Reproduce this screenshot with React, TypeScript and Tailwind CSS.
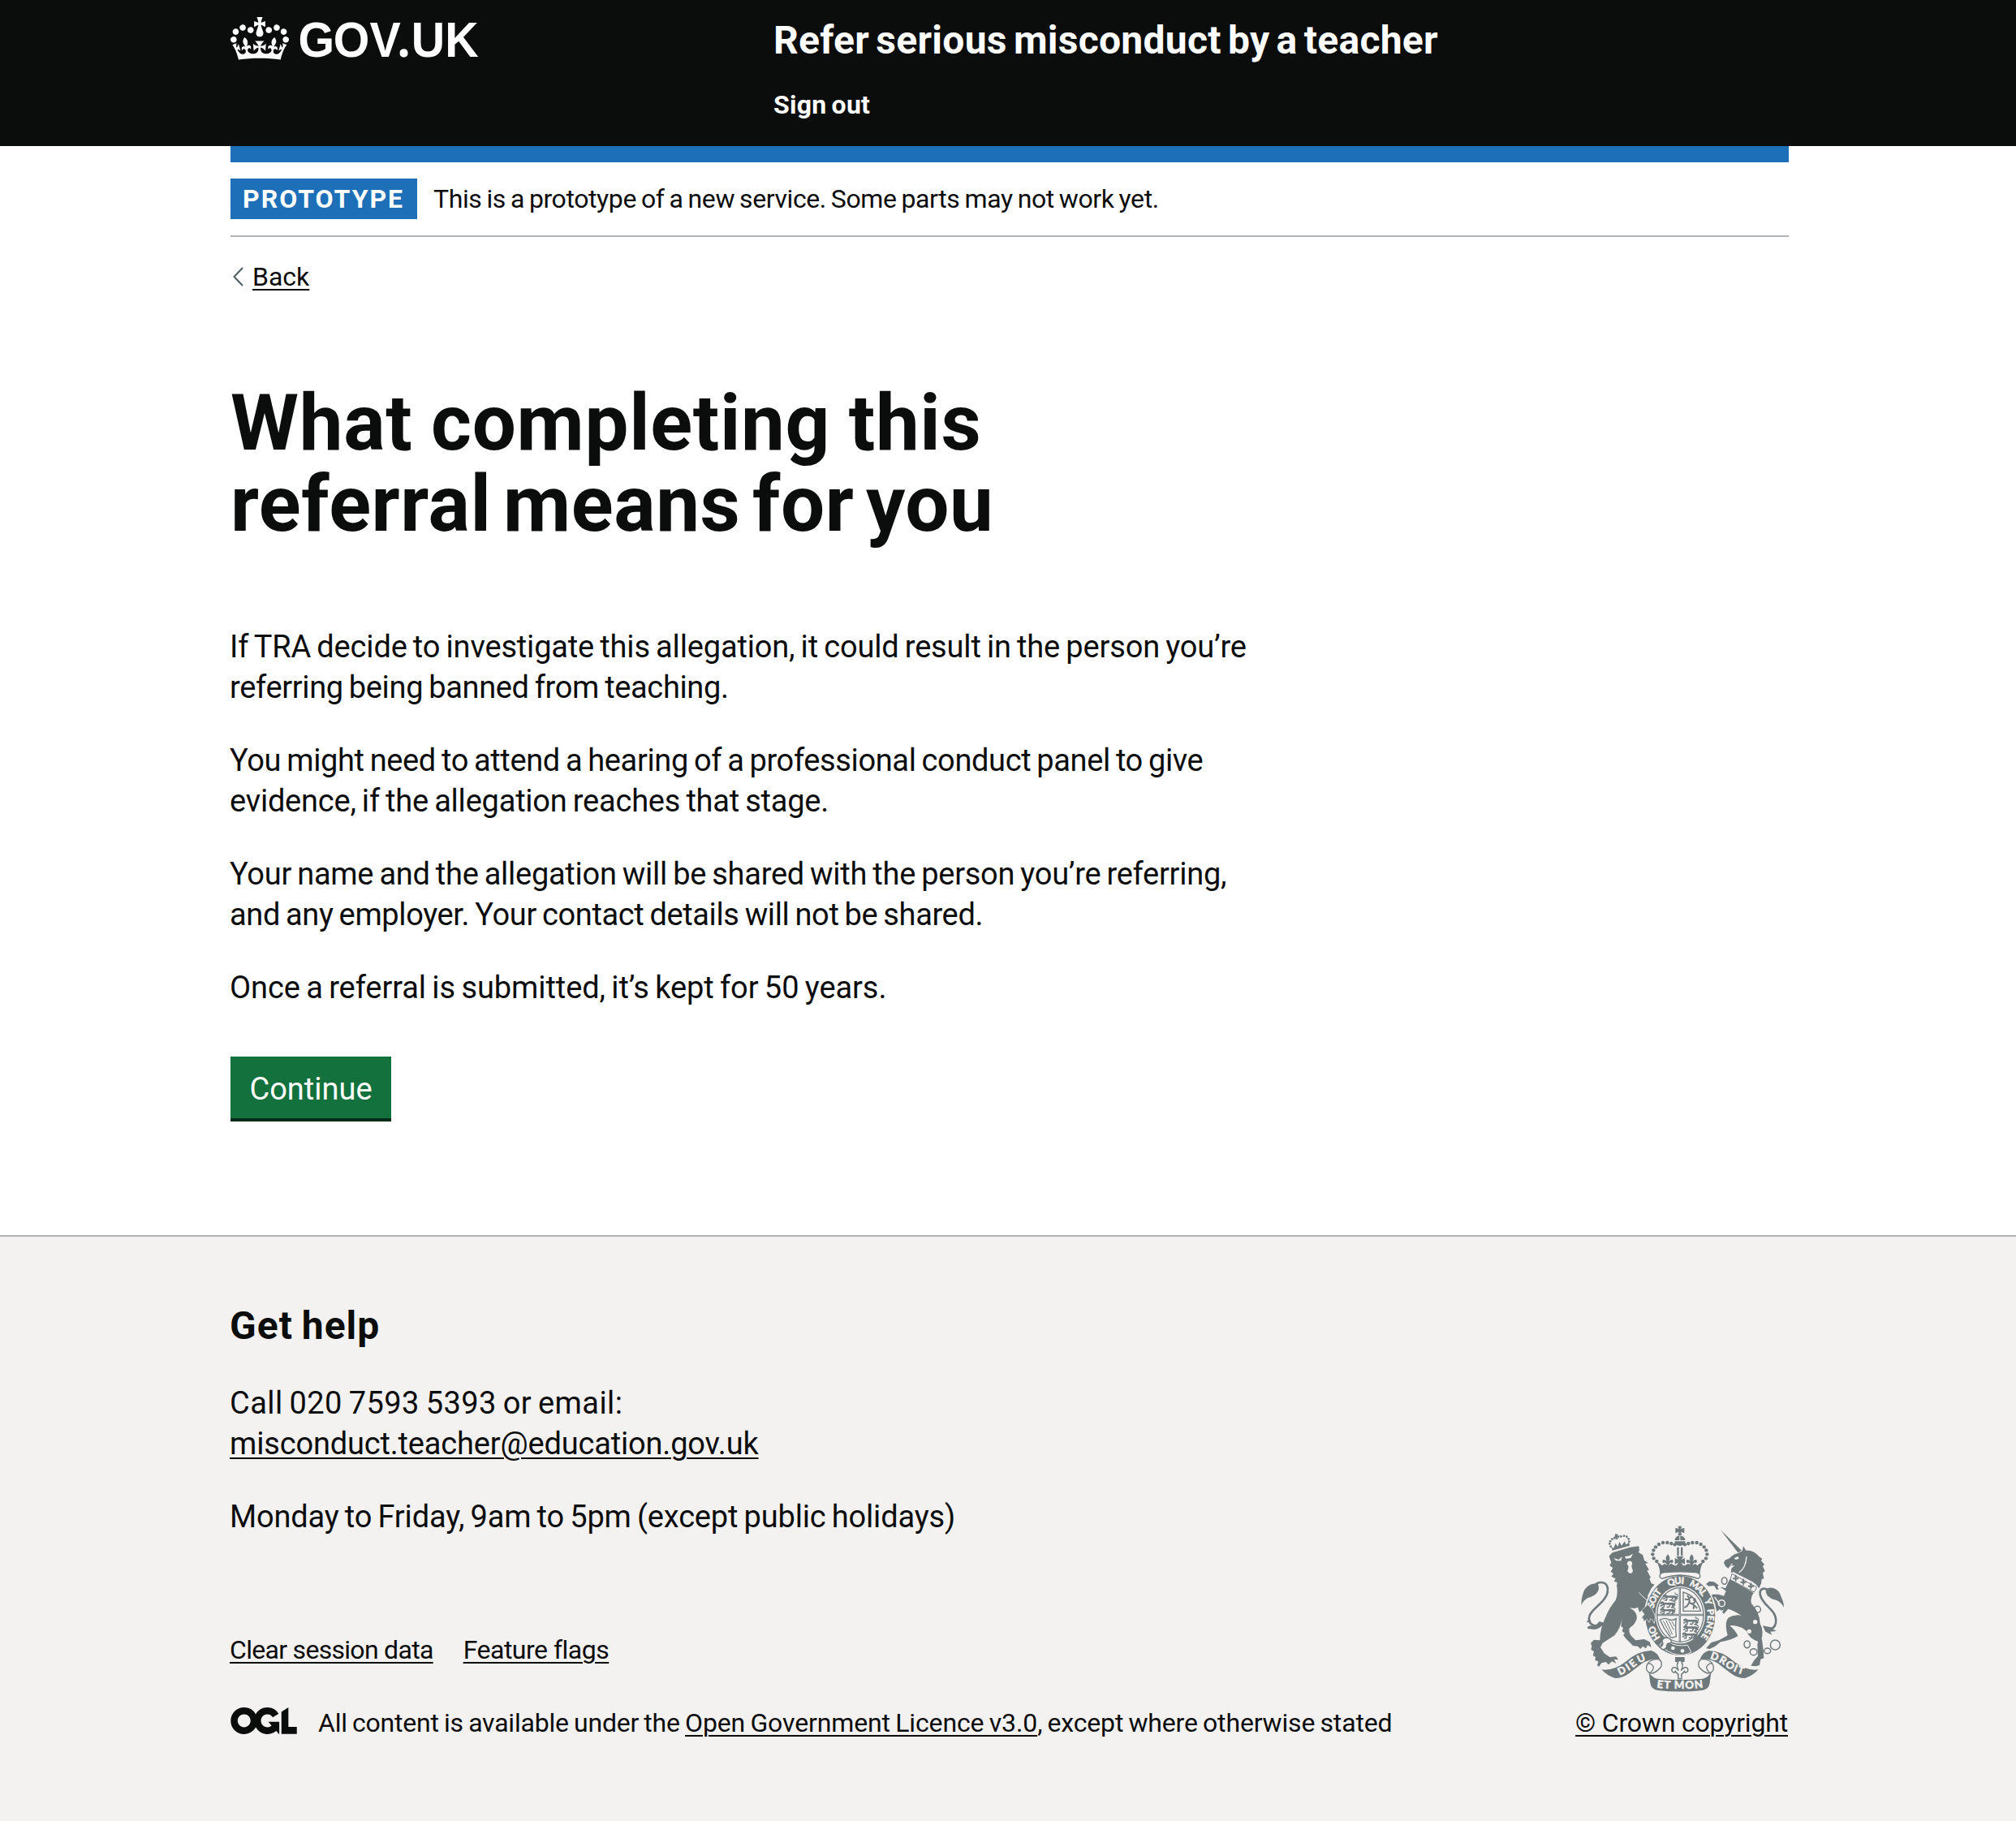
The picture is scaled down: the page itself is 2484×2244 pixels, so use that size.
import type { ReactNode } from "react";

function Crown() {
  return (
    <svg viewBox="0 0 132 97" className="mt-px h-[53px] w-[72px] fill-current" aria-hidden="true">
      <path
        fillRule="evenodd"
        d="M25 30.2c3.5 1.5 7.7-.2 9.1-3.7 1.5-3.6-.2-7.8-3.9-9.2-3.6-1.4-7.6.3-9.1 3.9-1.4 3.5.3 7.5 3.9 9zM9 39.5c3.6 1.5 7.8-.2 9.2-3.7 1.5-3.6-.2-7.8-3.9-9.1-3.6-1.5-7.6.2-9.1 3.8-1.4 3.5.3 7.5 3.8 9zM4.4 57.2c3.5 1.5 7.7-.2 9.1-3.8 1.5-3.6-.2-7.7-3.9-9.1-3.5-1.5-7.6.3-9.1 3.8-1.4 3.5.3 7.6 3.9 9.1zm38.3-21.4c3.5 1.5 7.7-.2 9.1-3.8 1.5-3.6-.2-7.7-3.9-9.1-3.6-1.5-7.6.3-9.1 3.8-1.3 3.6.4 7.7 3.9 9.1zm64.4-5.6c-3.6 1.5-7.8-.2-9.1-3.7-1.5-3.6.2-7.8 3.8-9.2 3.6-1.4 7.7.3 9.2 3.9 1.3 3.5-.4 7.5-3.9 9zm15.9 9.3c-3.6 1.5-7.7-.2-9.1-3.7-1.5-3.6.2-7.8 3.7-9.1 3.6-1.5 7.7.2 9.2 3.8 1.5 3.5-.3 7.5-3.8 9zm4.7 17.7c-3.6 1.5-7.8-.2-9.2-3.8-1.5-3.6.2-7.7 3.9-9.1 3.6-1.5 7.7.3 9.2 3.8 1.3 3.5-.4 7.6-3.9 9.1zM89.3 35.8c-3.6 1.5-7.8-.2-9.2-3.8-1.4-3.6.2-7.7 3.9-9.1 3.6-1.5 7.7.3 9.2 3.8 1.4 3.6-.3 7.7-3.9 9.1zM69.7 17.7l8.9 4.7V9.3l-8.9 2.8c-.2-.3-.5-.6-.9-.9L72.4 0H59.6l3.5 11.2c-.3.3-.6.5-.9.9l-8.8-2.8v13.1l8.8-4.7c.3.3.6.7.9.9l-5 15.4v.1c-.2.8-.4 1.6-.4 2.4 0 4.1 3.1 7.5 7 8.1h.2c.3 0 .7.1 1 .1.4 0 .7 0 1-.1h.2c4-.6 7.1-4.1 7.1-8.1 0-.8-.1-1.7-.4-2.4V34l-5.1-15.4c.4-.2.7-.6 1-.9zM66 92.8c16.9 0 32.8 1.1 47.1 3.2 4-16.9 8.9-26.7 14-33.5l-9.6-3.4c1 4.9 1.1 7.2 0 10.2-1.5-1.4-3-4.3-4.2-8.7L108.6 76c2.8-2 5-3.2 7.5-3.3-4.4 9.4-10 11.9-13.6 11.2-4.3-.8-6.3-4.6-5.6-7.9 1-4.7 5.7-5.9 8-.5 4.3-8.7-3-11.4-7.6-8.8 7.1-7.2 7.9-13.5 2.1-21.1-8 6.1-8.1 12.3-4.5 20.8-4.7-5.4-12.1-2.5-9.5 6.2 3.4-5.2 7.9-2 7.2 3.1-.6 4.3-6.4 7.8-13.5 7.2-10.3-.9-10.9-8-11.2-13.8 2.5-.5 7.1 1.8 11 7.3L80.2 60c-4.1 4.4-8 5.3-12.3 5.4 1.4-4.4 8-11.6 8-11.6H55.5s6.4 7.2 7.9 11.6c-4.2-.1-8-1-12.3-5.4l1.4 16.4c3.9-5.5 8.5-7.7 10.9-7.3-.3 5.8-.9 12.8-11.1 13.8-7.2.6-12.9-2.9-13.5-7.2-.7-5 3.8-8.3 7.1-3.1 2.7-8.7-4.6-11.6-9.4-6.2 3.7-8.5 3.6-14.7-4.6-20.8-5.8 7.6-5 13.9 2.2 21.1-4.7-2.6-11.9.1-7.7 8.8 2.3-5.5 7.1-4.2 8.1.5.7 3.3-1.3 7.1-5.7 7.9-3.5.7-9-1.8-13.5-11.2 2.5.1 4.7 1.3 7.5 3.3l-4.7-15.4c-1.2 4.4-2.7 7.2-4.3 8.7-1.1-3-.9-5.3 0-10.2l-9.5 3.4c5 6.9 9.9 16.7 14 33.5 14.8-2.1 30.8-3.2 47.7-3.2z"
      />
    </svg>
  );
}

function Wordmark() {
  return (
    <svg viewBox="0 0 240 70" className="h-[70px] w-[240px] overflow-visible fill-current font-['Liberation_Sans'] text-[61px] font-bold">
      <g transform="scale(.94 1)">
        <text y="60" x="4.7 50.7 98.500">GOV</text>
        <text y="60" x="134.6" className="font-['Noto_Sans']">.</text>
        <text y="60" x="153 197">UK</text>
      </g>
    </svg>
  );
}

function OglLogo() {
  return (
    <svg viewBox="0 0 483.2 195.7" className="h-[33px] w-[82px] fill-current" aria-hidden="true">
      <path d="M421.5 142.8V.1l-50.7 32.3v161.1h112.4v-50.7zm-122.3-9.6A47.12 47.12 0 0 1 221 97.8c0-26 21.1-47.1 47.1-47.1 16.7 0 31.4 8.7 39.7 21.8l42.7-27.2A97.63 97.63 0 0 0 268.1 0c-36.5 0-68.3 20.1-85.1 49.7A98 98 0 0 0 97.8 0C43.9 0 0 43.9 0 97.8s43.9 97.8 97.8 97.8c36.5 0 68.3-20.1 85.1-49.7a97.76 97.76 0 0 0 149.6 25.4l19.4 22.2h3v-87.8h-80l24.3 27.5zM97.8 145c-26 0-47.1-21.1-47.1-47.1s21.1-47.1 47.1-47.1 47.1 21.1 47.1 47.1S123.8 145 97.8 145" />
    </svg>
  );
}

const INK = "#6f797b";
const PAPER = "#f3f2f1";

const BEADS: [number, number][] = [
  [431, 128], [418, 124], [403, 121], [387, 121], [372, 127], [360, 137], [352, 149], [349, 164], [353, 179], [364, 190],
];

const SMALL_BEADS: [number, number][] = [
  [208, 104], [199, 108], [192, 116], [190, 125], [194, 135], [232, 98], [243, 96], [253, 99], [260, 107], [262, 117],
];

function HeraldicLion({ x, y }: { x: number; y: number }) {
  return (
    <g transform={`translate(${x} ${y})`} fill="none" stroke={INK} strokeWidth="4.5" strokeLinecap="round">
      <path d="M4 4 Q10 -2 13 5 L40 6 Q50 4 52 12" strokeWidth="8" />
      <path d="M12 9 L2 14 M16 10 L14 19 L8 19 M38 10 L32 19 L26 18 M46 11 L48 19 L42 19" />
      <path d="M52 10 Q60 2 52 -3 Q44 -4 46 -8" strokeWidth="3.5" />
    </g>
  );
}

function Fleur({ x, y, s }: { x: number; y: number; s: number }) {
  return (
    <g transform={`translate(${x} ${y}) scale(${s})`}>
      <path d="M0 -24 C9 -14 9 -6 3 4 C8 -4 18 -8 20 2 C20 9 13 10 11 6 C9 10 6 10 4 14 L4 24 L-4 24 L-4 14 C-6 10 -9 10 -11 6 C-13 10 -20 9 -20 2 C-18 -8 -8 -4 -3 4 C-9 -6 -9 -14 0 -24Z" />
    </g>
  );
}

function RoyalArms() {
  return (
    <svg viewBox="84 58 750 615" className="h-[205px] w-[250px]" fill={INK} role="img" aria-label="Royal coat of arms">
      {/* supporters: lion */}
      <path d="M190 178 L188 170 L200 158 L266 138 L298 134 L300 150 L296 156 L312 166 L318 186 L333 197 L322 198 L336 222 L328 224 L342 250 L337 254 L344 272 L356 276 L344 290 L330 318 L344 340 L356 368 L362 402 L355 420 L349 408 L341 402 L336 416 L328 404 L318 412 L314 404 L308 398 L318 386 L308 372 L300 378 L294 360 L283 364 L264 362 Q294 378 290 404 Q282 426 264 436 Q258 450 270 466 L286 482 L318 478 L338 488 L344 508 L330 500 L324 512 L312 504 L304 514 L294 504 L276 502 L262 488 L250 476 L240 462 L246 456 L236 448 L240 436 L232 430 L236 398 Q232 436 208 464 L164 492 L156 508 L170 530 L190 544 L214 542 L222 554 L206 552 L214 568 L198 560 L186 572 L176 562 L160 566 L150 580 L144 574 L148 560 L136 556 L138 544 L128 538 L132 524 L121 516 L124 504 L120 492 L132 480 L154 482 Q154 440 174 398 Q188 362 212 334 Q222 308 216 280 L218 268 L206 264 L212 254 L196 246 L204 236 L194 228 L202 214 L190 206 L196 194Z" />
      <path fill={PAPER} d="M204 178 L224 184 L236 172 L232 188 L214 188Z M246 172 L262 170 L276 162 L268 178 L250 180Z M258 190 Q272 184 274 200 Q268 206 272 214 Q280 228 270 234 Q258 236 256 224 Q262 212 258 204 Q250 204 258 190Z" />
      <path d="M198 152 L264 132" stroke={PAPER} strokeWidth="4" />
      <path d="M298 306 L334 340 Q352 366 352 402" fill="none" stroke={PAPER} strokeWidth="3" />
      <path d="M200 150 L196 136 L204 142 L212 124 L220 136 L226 118 L234 132 L246 116 L250 128 L262 120 L264 132Z" />
      <path d="M211 88 L222 91 L219 96 L227 95 L225 104 L219 101 L221 108 L212 109 L214 102 L207 104Z" />
      {SMALL_BEADS.map(([x, y]) => (
        <circle key={`${x}-${y}`} cx={x} cy={y} r="4.200" />
      ))}
      <path d="M164 418 C134 440 104 420 116 390 C128 362 168 346 180 312 C188 284 178 268 158 268 C146 268 138 274 134 282" fill="none" stroke={INK} strokeWidth="8" />
      <path d="M146 272 C122 270 102 282 94 302 C90 316 84 330 86 352 C92 336 104 326 120 322 C146 312 156 294 146 272Z M120 428 C104 430 104 442 118 440 C140 446 154 438 172 418 L152 412 C144 424 132 430 120 428Z M116 400 L104 416 L122 414Z" />

      {/* supporters: unicorn */}
      <path d="M600 74 L678 150 L664 158Z" />
      <path d="M664 160 L680 152 L684 134 L694 150 Q720 148 742 172 L754 180 L750 188 L762 202 L756 208 L764 226 L756 232 L760 254 L752 256 L750 272 L742 290 L732 276 L718 266 L648 230 L638 232 L640 216 L652 206 L636 206 L628 216 L618 208 L612 196 L616 186 L634 178 Q646 164 664 160Z" />
      <path fill={PAPER} d="M650 178 L664 172 L668 180 L656 184Z M636 200 L646 198 L640 204Z" />
      <path d="M696 172 Q694 214 668 232" fill="none" stroke={PAPER} strokeWidth="4" />
      <path d="M642 236 L734 286 L724 304 L636 258Z" fill={PAPER} stroke={INK} strokeWidth="3" />
      <g>
        <Fleur x={656} y={252} s={0.55} />
        <Fleur x={684} y={266} s={0.55} />
        <Fleur x={712} y={281} s={0.55} />
      </g>
      <path d="M634 256 L722 306 Q708 326 714 346 Q744 376 746 420 Q760 444 752 474 L758 516 L760 548 L748 552 L744 574 L730 578 L712 576 L724 556 L738 540 L736 500 L738 486 Q706 476 696 448 L680 436 Q650 424 634 428 Q656 446 664 466 Q640 482 600 488 L580 504 L560 514 L546 512 L566 490 L594 482 L626 464 L622 446 Q616 412 630 398 Q650 386 676 390 Q650 372 628 366 L612 384 L606 378 L612 368 L604 372 L596 368 L586 376 L578 356 L566 346 L556 326 L570 312 L592 312 L612 318 L620 300 L604 288 L586 296 L576 280 L556 282 L546 274 L558 264 L576 266 L600 284 L618 290Z" />
      <path d="M578 322 L598 350" stroke={PAPER} strokeWidth="4" />
      <g fill={PAPER}>
        <circle cx="728" cy="414" r="8" />
        <circle cx="706" cy="449" r="8" />
        <circle cx="596" cy="285" r="7" />
      </g>
      <g fill="none" stroke={INK} strokeWidth="4.500">
        <ellipse cx="614" cy="262" rx="10" ry="13" />
        <circle cx="604" cy="345" r="12" stroke={PAPER} />
        <circle cx="736" cy="368" r="12" />
        <ellipse cx="698" cy="497" rx="11" ry="13" />
        <ellipse cx="722" cy="525" rx="13" ry="12" />
        <ellipse cx="773" cy="521" rx="12" ry="10" />
        <circle cx="802" cy="499" r="18" />
      </g>
      <path d="M764 440 C800 450 814 416 798 384 C782 358 752 344 746 312 C744 292 758 286 774 296" fill="none" stroke={INK} strokeWidth="8" />
      <path d="M768 292 C792 280 816 296 822 316 C828 332 834 342 834 360 C824 342 812 334 798 332 C774 324 764 308 768 292Z M756 428 L766 450 L790 462 L784 450 L806 448 L792 440 L804 430 L786 434Z" />

      {/* garter and shield */}
      <ellipse cx="451" cy="391" rx="134" ry="152" fill={PAPER} />
      <ellipse cx="451" cy="391" rx="129" ry="147" />
      <ellipse cx="451" cy="388" rx="92" ry="106" fill={PAPER} />
      <ellipse cx="451" cy="388" rx="86" ry="100" fill="none" stroke={INK} strokeWidth="4" />
      <path d="M449.500 286 V488 M364 388 H538" stroke={INK} strokeWidth="7" />
      <path d="M449.500 288 V486 M366 388 H536" stroke={PAPER} strokeWidth="1.500" />
      <HeraldicLion x={386} y={315} />
      <HeraldicLion x={376} y={341} />
      <HeraldicLion x={376} y={365} />
      <HeraldicLion x={462} y={404} />
      <HeraldicLion x={462} y={429} />
      <HeraldicLion x={458} y={455} />
      <path d="M462 304 Q510 318 526 374 H462Z" fill="none" stroke={INK} strokeWidth="4" />
      <g fill="none" stroke={INK} strokeWidth="6" strokeLinecap="round">
        <path d="M478 318 Q488 330 484 342 L502 352 L500 364 M484 342 L476 356 L468 360 M482 332 L470 330 M484 326 L494 322 M502 352 L512 362 M496 346 Q510 342 506 330 Q500 326 502 334" />
      </g>
      <g fill="none" stroke={INK} strokeWidth="4">
        <path d="M376 406 Q396 396 410 406 Q424 410 436 402 Q432 426 436 468 Q418 476 412 468 Q390 440 376 406Z" />
        <path d="M388 410 L416 464 M398 408 L422 460 M409 410 L427 444 M420 412 L430 430" strokeWidth="3" />
      </g>
      <defs>
        <path id="garter-text" d="M400 510 A116 133 0 0 1 335 391 A116 133 0 0 1 567 391 A116 133 0 0 1 480 520" />
        <path id="dieu" d="M228 612 Q262 596 286 576 Q306 560 340 552" />
        <path id="droit" d="M560 550 Q596 560 620 580 Q650 602 696 612" />
        <path id="et-mon" d="M364 657 Q450 668 540 656" />
      </defs>
      <g
        fill={PAPER}
        stroke={PAPER}
        strokeWidth="1.200"
        className="font-['Lato'] text-[34px] font-black"
        dominantBaseline="central"
      >
        <text><textPath href="#garter-text" startOffset="46">HO</textPath></text>
        <text><textPath href="#garter-text" startOffset="172" textLength="76">SOIT</textPath></text>
        <text><textPath href="#garter-text" startOffset="288" textLength="64">QUI</textPath></text>
        <text><textPath href="#garter-text" startOffset="378" textLength="72">MAL</textPath></text>
        <text><textPath href="#garter-text" startOffset="468">Y</textPath></text>
        <text><textPath href="#garter-text" startOffset="508" textLength="118">PENSE</textPath></text>
      </g>
      <path d="M310 396 L318 386 L308 372 L330 350 Q352 366 358 396 L355 420 L349 408 L341 402 L336 416 L328 404 L318 412Z" stroke={PAPER} strokeWidth="2" />
      <path d="M374 500 Q392 478 410 490 Q436 506 478 500 L492 526 Q440 556 374 500Z" stroke={PAPER} strokeWidth="3" />
      <path d="M398 472 Q420 474 418 492 Q398 490 400 508 Q388 524 376 508 Q392 500 384 484 Q386 474 398 472Z" fill={PAPER} stroke={INK} strokeWidth="4" />
      <circle cx="424" cy="511" r="7" fill={PAPER} />
      <circle cx="459" cy="521" r="7" fill={PAPER} />
      <path d="M432 544 H467 V562 H432Z" />
      <g fill={PAPER} stroke={INK} strokeWidth="3">
        <Fleur x={449.5} y={588} s={1.5} />
      </g>

      {/* royal crown */}
      <path d="M442 60 H457 L453 70 L466 66 V86 L453 81 L457 93 H442 L446 81 L433 86 V66 L446 70Z" />
      <path d="M430 112 Q434 96 449 95 Q466 96 470 112Z M430 116 H470 Q468 132 449.500 133 Q432 132 430 116Z" />
      <path d="M449.500 96 V112" stroke={PAPER} strokeWidth="3" />
      {BEADS.map(([x, y]) => (
        <g key={`${x}-${y}`}>
          <circle cx={x} cy={y} r="6.6" />
          <circle cx={899 - x} cy={y} r="6.6" />
        </g>
      ))}
      <path d="M439 138 H446 V170 H439Z M453 138 H460 V170 H453Z" />
      <path d="M364 192 L378 200 L384 206 L392 198 L404 206 L418 198 L430 206 L449 204 L468 206 L480 198 L494 206 L506 198 L514 206 L520 200 L535 192 Q524 214 523 238 Q450 220 376 238 Q376 212 364 192Z" />
      <Fleur x={405} y={188} s={1} />
      <Fleur x={493} y={188} s={1} />
      <path d="M436 172 H463 L455 184 L468 178 V202 L455 194 L462 208 H436 L444 194 L431 202 V178 L444 184Z" />
      <path d="M384 254 Q372 250 376 240 Q380 232 394 231 Q450 226 506 231 Q520 232 524 241 Q526 250 516 254 Q484 242 450 241 Q416 242 384 254Z" fill={PAPER} stroke={INK} strokeWidth="4" />

      {/* motto ribbon */}
      <path d="M160 590 Q204 596 248 562 Q296 520 344 520 Q366 526 376 552 Q340 548 312 566 Q284 588 262 604 Q238 622 210 622 Q182 614 160 590Z" />
      <path d="M740 590 Q696 596 652 562 Q604 520 556 520 Q534 526 524 552 Q560 548 588 566 Q616 588 638 604 Q662 622 690 622 Q718 614 740 590Z" />
      <g fill={PAPER} stroke={INK} strokeWidth="4">
        <path d="M372 552 Q386 562 380 580 Q366 598 348 604 Q330 604 326 588 Q324 566 346 556 Q360 550 372 552Z" />
        <path d="M528 552 Q514 562 520 580 Q534 598 552 604 Q570 604 574 588 Q576 566 554 556 Q540 550 528 552Z" />
        <path d="M330 570 Q340 562 352 580 Q352 592 340 602" fill="none" />
        <path d="M570 570 Q560 562 548 580 Q548 592 560 602" fill="none" />
      </g>
      <path d="M334 596 Q344 620 366 624 Q450 632 534 624 Q556 620 566 596 Q562 622 560 640 Q556 664 532 667 Q450 676 368 667 Q344 664 340 640 Q338 622 334 596Z" />
      <g fill={PAPER} stroke={PAPER} strokeWidth="1.200" className="font-['Lato'] text-[40px] font-black">
        <text className="text-[38px]"><textPath href="#dieu" textLength="112">DIEU</textPath></text>
        <text className="text-[38px]"><textPath href="#droit" textLength="136">DROIT</textPath></text>
        <text><textPath href="#et-mon" textLength="172">ET MON</textPath></text>
      </g>
    </svg>
  );
}

function Line({ className, children }: { className?: string; children: ReactNode }) {
  return <span className={`block whitespace-nowrap ${className ?? ""}`}>{children}</span>;
}

function Link({ className, children }: { className?: string; children: ReactNode }) {
  return (
    <a href="#" className={`whitespace-nowrap underline decoration-2 underline-offset-[4px] ${className ?? ""}`}>
      {children}
    </a>
  );
}

export default function App() {
  return (
    <div className="flex min-h-[2244px] w-[2484px] flex-col bg-white font-['Roboto','Liberation_Sans',sans-serif] text-[#0b0c0c]">
      <header className="h-[180px] bg-[#0b0c0c] text-white">
        <div className="ml-[284px] flex w-[1920px]">
          <a href="#" className="flex w-[669px] items-start pt-[20px]">
            <Crown />
            <span className="-mt-[10px] ml-[7px]">
              <Wordmark />
            </span>
          </a>
          <div className="flex flex-col items-start pt-[20px] font-bold">
            <a href="#" className="text-[48px] leading-[60px] tracking-[0.27px] whitespace-nowrap [word-spacing:-4px]">
              Refer serious misconduct by a teacher
            </a>
            <a href="#" className="mt-[29px] text-[32px] leading-[40px] tracking-[0.25px] [word-spacing:-2px]">
              Sign out
            </a>
          </div>
        </div>
      </header>

      <div className="ml-[284px] w-[1920px]">
        <div className="h-[20px] bg-[#1d70b8]" />
        <div className="flex h-[92px] items-center border-b-2 border-[#b1b4b6]">
          <strong className="flex h-[50px] w-[230px] items-center bg-[#1d70b8] pl-[15px] text-[32px] leading-[50px] font-bold tracking-[2px] text-white">
            PROTOTYPE
          </strong>
          <span className="ml-[20px] text-[32px] leading-[40px] tracking-[-0.41px] whitespace-nowrap [word-spacing:-1.5px]">
            This is a prototype of a new service. Some parts may not work yet.
          </span>
        </div>
        <a href="#" className="mt-[29px] flex w-fit items-center text-[32px] leading-[40px]">
          <svg viewBox="0 0 14 26" className="ml-[2px] h-[26px] w-[14px]" fill="none" stroke="#505a5f" strokeWidth="2">
            <path d="M13 2 2.500 13 13 24" />
          </svg>
          <span className="ml-[11px] underline decoration-2 underline-offset-[4px]">Back</span>
        </a>

        <main className="mt-[110px] text-[38px] leading-[50px]">
          <h1 className="text-[96px] leading-[100px] font-bold">
            <Line className="tracking-[0.7px] [word-spacing:-2px]">What completing this</Line>
            <Line className="tracking-[0.6px] [word-spacing:-10px]">referral means for you</Line>
          </h1>
          <div className="-ml-px mt-[101px] flex flex-col gap-[40px] [word-spacing:-2px]">
            <p>
              <Line className="tracking-[-0.17px]">If TRA decide to investigate this allegation, it could result in the person you’re</Line>
              <Line className="tracking-[-0.35px]">referring being banned from teaching.</Line>
            </p>
            <p>
              <Line className="tracking-[-0.37px]">You might need to attend a hearing of a professional conduct panel to give</Line>
              <Line className="tracking-[-0.22px]">evidence, if the allegation reaches that stage.</Line>
            </p>
            <p>
              <Line className="tracking-[-0.27px]">Your name and the allegation will be shared with the person you’re referring,</Line>
              <Line className="tracking-[-0.37px]">and any employer. Your contact details will not be shared.</Line>
            </p>
            <p>
              <Line className="tracking-[-0.08px]">Once a referral is submitted, it’s kept for 50 years.</Line>
            </p>
          </div>
          <button
            type="button"
            className="mt-[60px] flex h-[80px] w-[198px] items-center justify-center border-b-4 border-[#042b19] bg-[#13713d] pt-[3px] text-[38px] text-white"
          >
            Continue
          </button>
        </main>
      </div>

      <footer className="mt-[140px] grow border-t-2 border-[#b1b4b6] bg-[#f3f2f1]">
        <div className="ml-[284px] flex w-[1920px] items-end justify-between pt-[80px]">
          <div>
            <h2 className="-ml-px text-[48px] leading-[60px] font-bold tracking-[1px] [word-spacing:-2px]">Get help</h2>
            <div className="-ml-px mt-[40px] flex flex-col gap-[40px] text-[38px] leading-[50px] [word-spacing:-2px]">
              <p>
                <Line className="tracking-[0.43px]">Call 020 7593 5393 or email:</Line>
                <Link className="tracking-[-0.17px]">misconduct.teacher@education.gov.uk</Link>
              </p>
              <p className="tracking-[-0.17px]">Monday to Friday, 9am to 5pm (except public holidays)</p>
            </div>
            <div className="-ml-px mt-[119px] flex gap-[37px] text-[32px] leading-[40px]">
              <Link className="tracking-[-0.7px]">Clear session data</Link>
              <Link className="tracking-[-0.5px]">Feature flags</Link>
            </div>
            <div className="mt-[50px] flex text-[32px] leading-[40px]">
              <span className="mt-px">
                <OglLogo />
              </span>
              <span className="ml-[26px] whitespace-pre tracking-[-0.21px] [word-spacing:-1.5px]">
                {"All content is available under the "}
                <Link className="tracking-[-0.13px]">Open Government Licence v3.0</Link>
                <span className="tracking-[-0.17px]">, except where otherwise stated</span>
              </span>
            </div>
          </div>
          <div className="flex flex-col items-end">
            <span className="mr-[6px]">
              <RoyalArms />
            </span>
            <Link className="mt-[18px] mr-px text-[32px] leading-[40px] tracking-[-0.18px]">© Crown copyright</Link>
          </div>
        </div>
      </footer>
    </div>
  );
}
